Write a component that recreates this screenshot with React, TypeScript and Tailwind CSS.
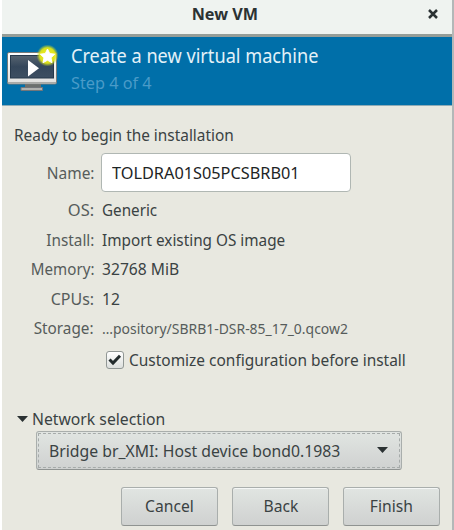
import React from 'react';

const details = [
  { label: 'OS:', labelScale: 'scale-x-[0.97]', value: 'Generic', scale: 'scale-x-[0.895]' },
  { label: 'Install:', labelScale: 'scale-x-[0.9]', value: 'Import existing OS image', scale: 'scale-x-[0.9]' },
  { label: 'Memory:', labelScale: 'scale-x-[0.89]', value: '32768 MiB', scale: 'scale-x-[0.92]' },
  { label: 'CPUs:', labelScale: 'scale-x-[0.94]', value: '12', scale: 'scale-x-[0.92]' },
];

function MonitorIcon() {
  return (
    <svg width="54" height="50" viewBox="0 0 54 50" className="block">
      <defs>
        <linearGradient id="screen" x1="0" y1="0" x2="0" y2="1">
          <stop offset="0" stopColor="#56636f" />
          <stop offset="0.5" stopColor="#35475b" />
          <stop offset="1" stopColor="#3d4f62" />
        </linearGradient>
        <linearGradient id="frame" x1="0" y1="0" x2="0" y2="1">
          <stop offset="0" stopColor="#ffffff" />
          <stop offset="1" stopColor="#e0e0de" />
        </linearGradient>
        <radialGradient id="glow">
          <stop offset="0" stopColor="#f4f02a" />
          <stop offset="0.7" stopColor="#e3e716" stopOpacity="0.95" />
          <stop offset="1" stopColor="#b9d02c" stopOpacity="0" />
        </radialGradient>
      </defs>
      <path d="M19 39h16v4h-16z" fill="#6c706e" />
      <path d="M15 42.500h21.500v3h-21.500z" fill="#b0b2af" stroke="#73767a" strokeWidth="1" />
      <rect x="1.500" y="7.500" width="49" height="31.500" rx="1.500" fill="url(#frame)" stroke="#777a78" />
      <rect x="4.500" y="10.500" width="43" height="22.500" fill="url(#screen)" stroke="#26384a" />
      <path d="M2 37h48v1.500H2z" fill="#a9aaa7" />
      <path d="M22 15v16.500l11-8.250z" fill="#fff" />
      <circle cx="41.500" cy="10.500" r="11" fill="url(#glow)" />
      <path
        d="M41.500 4l2.200 4.600 5 .6-3.700 3.500 1 5-4.500-2.500-4.500 2.500 1-5-3.700-3.500 5-.6z"
        fill="#fff"
        stroke="#fff"
        strokeLinejoin="round"
      />
    </svg>
  );
}

function ActionButton({ children }: { children: React.ReactNode }) {
  return (
    <button
      type="button"
      className="flex h-[39px] w-[97px] items-center justify-center rounded-[3px] border border-[#a9aeac] border-b-[#8f9391] bg-linear-to-b from-[#e1e5e2] to-[#cfd1d0] shadow-[inset_0_1px_0_#f5f7f6]"
    >
      <span className="scale-x-[0.92] leading-[24px]">{children}</span>
    </button>
  );
}

export default function App() {
  return (
    <div className="h-[530px] w-[454px] overflow-hidden bg-white pl-[2px] font-['Noto_Sans',sans-serif] text-[17px] whitespace-nowrap text-[#3a4243]">
      <div className="flex h-full flex-col border-r-2 border-[#b3b8b8] bg-[#e8e8e0]">
        <div className="flex h-[37px] shrink-0 items-center border-b-3 border-[#959d98] bg-[#eff3f0] pb-[6px]">
          <div className="w-[38px]" />
          <h1 className="flex-1 pr-[5px] text-center text-[16.500px] font-bold text-[#2b3233]">
            <span className="inline-block scale-x-[0.98]">New VM</span>
          </h1>
          <button type="button" className="flex w-[38px] justify-center">
            <svg width="12" height="12" viewBox="0 0 12 12">
              <path d="M2 2l8 8M10 2l-8 8" stroke="#2b3233" strokeWidth="2.500" />
            </svg>
          </button>
        </div>

        <div className="flex h-[69px] shrink-0 border-b border-[#8eabb6] bg-[#006fa9] pt-[8px] pl-[4px]">
          <MonitorIcon />
          <div className="pl-[11px]">
            <h2 className="origin-left scale-x-[0.955] text-[19px] leading-[22px] text-[#e3f1f8]">
              Create a new virtual machine
            </h2>
            <p className="mt-[2px] origin-left scale-x-[0.955] leading-[28px] text-[#4a9bc8]">Step 4 of 4</p>
          </div>
        </div>

        <div className="pt-[17px] pl-[12px]">
          <p className="origin-left scale-x-[0.905] leading-[24px]">Ready to begin the installation</p>
        </div>

        <div className="mt-[6px] flex items-center">
          <div className="flex w-[92px] justify-end">
            <span className="origin-right scale-x-[0.91] text-[#565c5b]">Name:</span>
          </div>
          <div className="ml-[7px] flex h-[39px] w-[250px] items-center rounded-[4px] border border-[#b0b7b3] bg-white pl-[10px] text-[#1d2425]">
            <span className="origin-left scale-x-[0.958]">TOLDRA01S05PCSBRB01</span>
          </div>
        </div>

        <div className="mt-[3px]">
          {details.map(row => (
            <div key={row.label} className="flex h-[29.600px] items-center">
              <div className="flex w-[92px] justify-end">
                <span className={`origin-right text-[#565c5b] ${row.labelScale}`}>{row.label}</span>
              </div>
              <span className={`ml-[8px] origin-left ${row.scale}`}>{row.value}</span>
            </div>
          ))}
          <div className="flex h-[29.600px] items-center">
            <div className="flex w-[92px] justify-end">
              <span className="origin-right scale-x-[0.9] text-[#565c5b]">Storage:</span>
            </div>
            <span className="ml-[8px] origin-left scale-x-[0.995] text-[14px] text-[#565c5b]">
              …pository/SBRB1-DSR-85_17_0.qcow2
            </span>
          </div>
        </div>

        <label className="mt-[5px] flex h-[24px] items-center pl-[104px]">
          <span className="flex size-[18px] items-center justify-center rounded-[3px] border border-[#919795] bg-linear-to-b from-white to-[#dcdfdd]">
            <svg width="14" height="12" viewBox="0 0 14 12">
              <path d="M1.500 5.500L5 9L12 1.800" fill="none" stroke="#222b2c" strokeWidth="3" />
            </svg>
          </span>
          <span className="ml-[5px] origin-left scale-x-[0.909]">Customize configuration before install</span>
        </label>

        <div className="mt-[35px] flex h-[24px] items-center pl-[15px]">
          <svg width="11" height="6" viewBox="0 0 11 6">
            <path d="M0 0h11L5.500 6z" fill="#2b3233" />
          </svg>
          <span className="ml-[4px] origin-left scale-x-[0.925]">Network selection</span>
        </div>

        <div className="pl-[34px]">
          <button
            type="button"
            className="flex h-[39px] w-[366px] rounded-[3px] border border-[#a9aeac] border-b-[#8f9391] bg-linear-to-b from-[#e1e5e2] to-[#cfd1d0] p-[1px]"
          >
            <span className="flex flex-1 items-center justify-between self-stretch border border-dashed border-[#a6abaa] pr-[11px] pl-[10px]">
              <span className="origin-left scale-x-[0.928]">Bridge br_XMI: Host device bond0.1983</span>
              <svg width="11" height="6" viewBox="0 0 11 6">
                <path d="M0 0h11L5.500 6z" fill="#2b3233" />
              </svg>
            </span>
          </button>
        </div>

        <div className="mt-[17px] flex gap-[14px] pl-[119px]">
          <ActionButton>Cancel</ActionButton>
          <ActionButton>Back</ActionButton>
          <ActionButton>Finish</ActionButton>
        </div>
      </div>
    </div>
  );
}
